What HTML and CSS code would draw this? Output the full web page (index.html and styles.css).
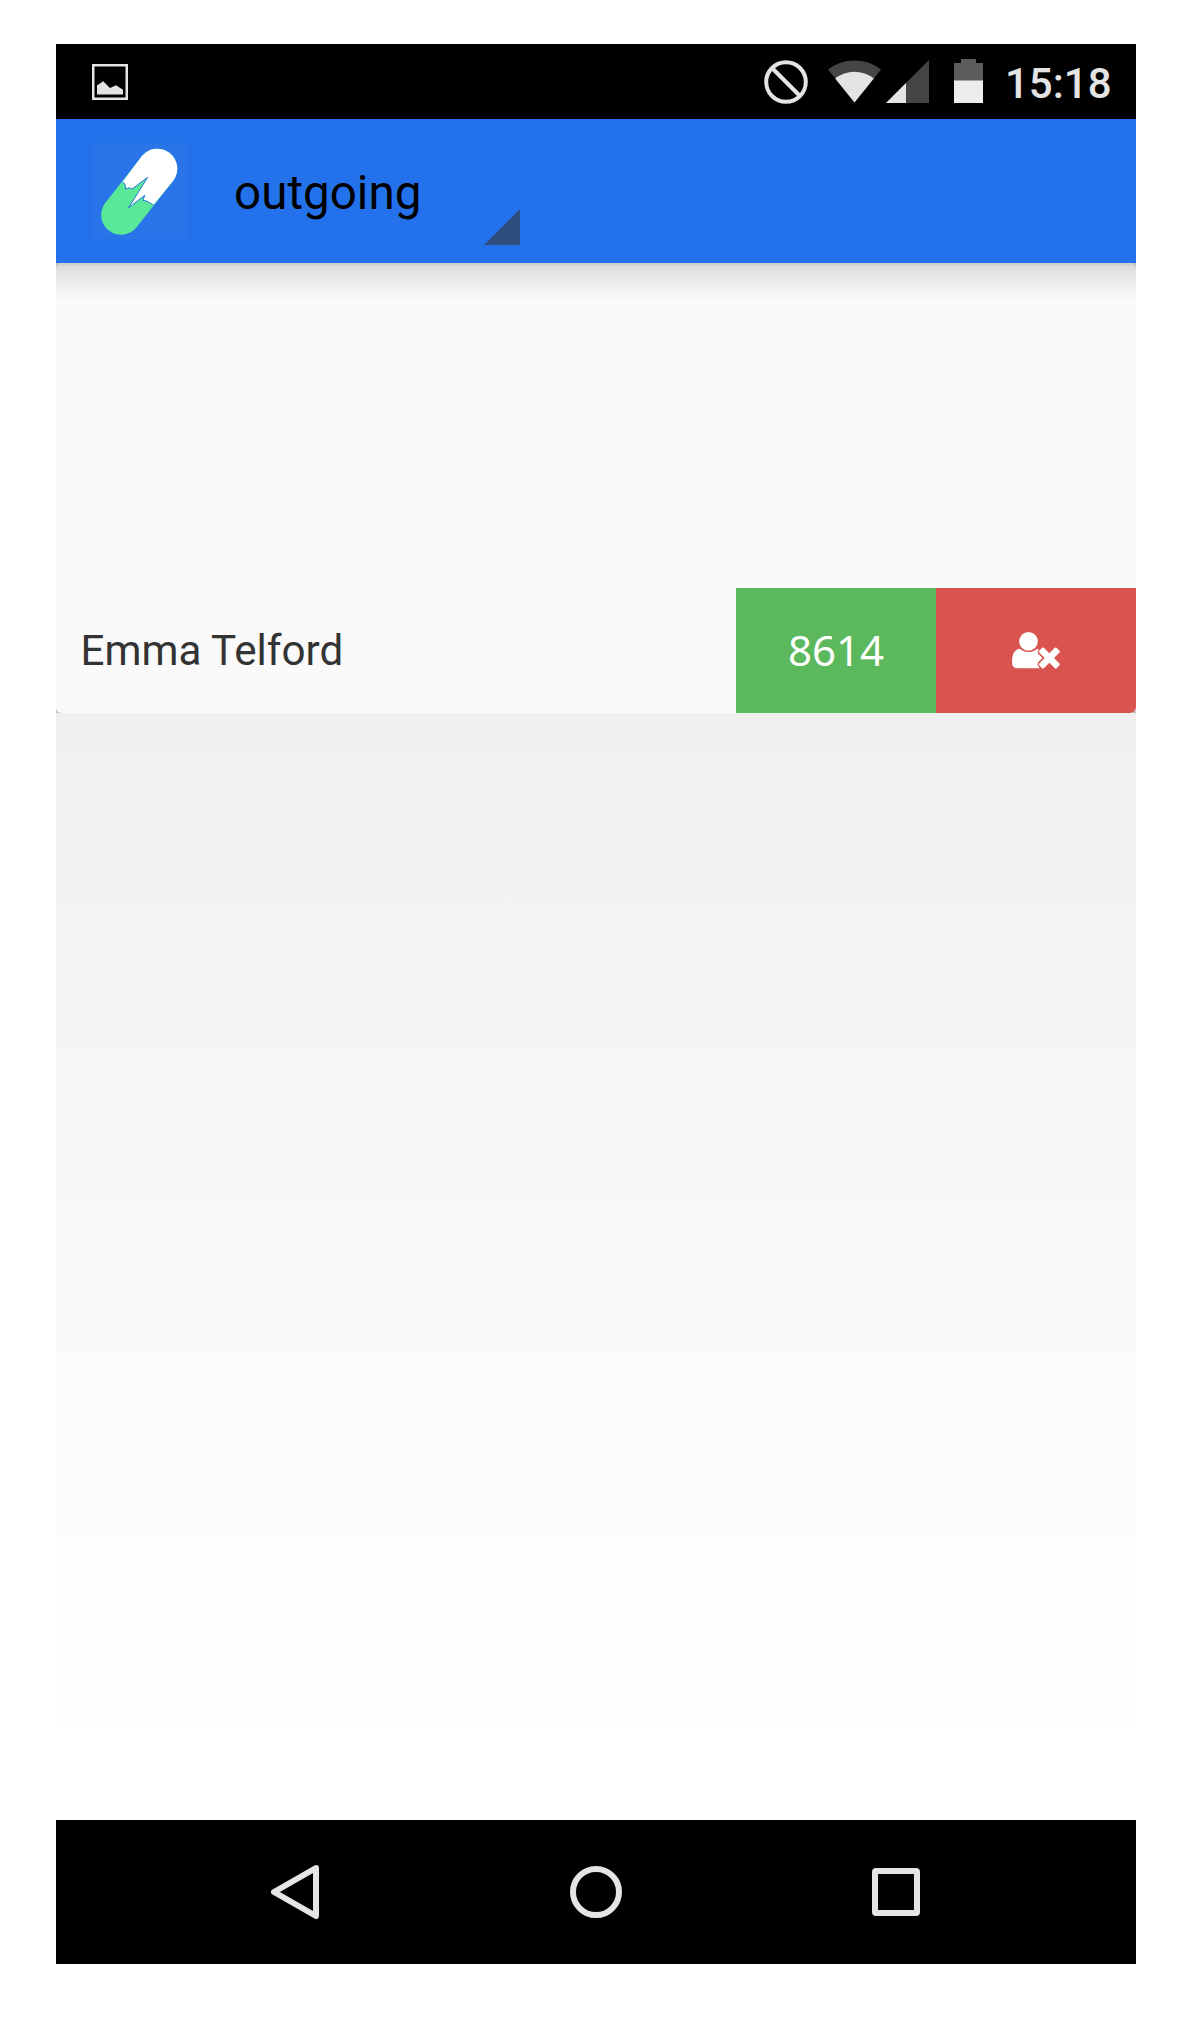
FILE: index.html
```html
<!DOCTYPE html>
<html lang="en">
<head>
<meta charset="utf-8">
<title>outgoing</title>
<link rel="stylesheet" href="styles.css">
</head>
<body>
<div class="phone">
  <header class="status-bar">
    <svg class="icon-picture" width="36" height="36" viewBox="0 0 36 36">
      <rect x="1.25" y="1.25" width="33.5" height="33.5" fill="none" stroke="#e4e4e4" stroke-width="2.5"/>
      <path d="M5 30.5V21.5L11.2 17.3L18 24L24 21.3L31 25.7V30.5Z" fill="#e4e4e4"/>
    </svg>
    <div class="status-icons">
      <svg class="icon-blocked" width="44" height="44" viewBox="0 0 44 44" fill="none" stroke="#e4e4e4" stroke-width="4">
        <circle cx="22" cy="22" r="19.8"/>
        <path d="M8 8L36 36"/>
      </svg>
      <svg class="icon-wifi" width="53" height="43" viewBox="0 0 53 43">
        <path d="M26.5 42.5L0 9.5Q11.500 .4 26.500 .4T53 9.500Z" fill="#454545"/>
        <path d="M26.500 42.500L7.200 18.400Q16 11.700 26.500 11.700T45.800 18.400Z" fill="#e4e4e4"/>
      </svg>
      <svg class="icon-signal" width="43" height="43" viewBox="0 0 43 43">
        <path d="M43 0V43H0Z" fill="#454545"/>
        <path d="M20 23V43H0Z" fill="#e4e4e4"/>
      </svg>
      <svg class="icon-battery" width="29" height="44" viewBox="0 0 29 44">
        <path d="M7 0H22V4H29V44H0V4H7Z" fill="#5c5c5c"/>
        <path d="M0 21.500H29V44H0Z" fill="#ededed"/>
      </svg>
      <span class="clock">15:18</span>
    </div>
  </header>

  <nav class="action-bar">
    <svg class="logo" width="93" height="96" viewBox="9 24 279 288">
      <rect x="9" y="24" width="279" height="288" fill="#2874e8"/>
      <path d="M202 101L93 240" stroke="#58e898" stroke-width="119" stroke-linecap="round"/>
      <path d="M98 140L155 64A59.500 59.500 0 0 1 249 138L190 210L172 199L159 196L164 181L115 219L173 127L126 162L118 158L107 162L105 148Z" fill="#fff"/>
      <path d="M98 140L105 148L107 162L118 158L126 162L173 127L115 219L164 181L159 196L172 199L190 210" fill="none" stroke="#2874dc" stroke-width="3"/>
    </svg>
    <div class="spinner">
      <span class="spinner-label">outgoing</span>
      <span class="spinner-arrow"></span>
    </div>
  </nav>

  <main class="content">
    <div class="list-frame">
      <section class="list">
        <div class="row">
          <span class="name">Emma Telford</span>
          <button class="button code">8614</button>
          <button class="button remove" aria-label="Remove">
            <svg width="48" height="37" viewBox="0 0 144 111">
              <path d="M23 50C29 55 38 60 50 60S70 55 76 50Q79 50 80 54L76 59L92 78L76 97L83 109H17Q0 109 0 91C0 67 8 51 23 50Z" fill="#fff"/>
              <circle cx="49.500" cy="28" r="31" fill="#d9534f"/>
              <circle cx="49.500" cy="28" r="28" fill="#fff"/>
              <g transform="rotate(45 112 78)">
                <path d="M77 78H147M112 43V113" stroke="#d9534f" stroke-width="29"/>
                <rect x="75" y="68" width="74" height="20" rx="4" fill="#fff"/>
                <rect x="102" y="41" width="20" height="74" rx="4" fill="#fff"/>
              </g>
            </svg>
          </button>
        </div>
      </section>
    </div>
  </main>

  <footer class="nav-bar">
    <svg width="50" height="56" viewBox="0 0 50 56"><path d="M46 4L4 28L46 52Z" fill="none" stroke="#e5e5e5" stroke-width="6" stroke-linejoin="round"/></svg>
    <svg width="52" height="52" viewBox="0 0 52 52"><circle cx="26" cy="26" r="23" fill="none" stroke="#e5e5e5" stroke-width="6"/></svg>
    <svg width="48" height="48" viewBox="0 0 48 48"><path fill-rule="evenodd" d="M4 0H44Q48 0 48 4V44Q48 48 44 48H4Q0 48 0 44V4Q0 0 4 0ZM6 6V42H42V6Z" fill="#e5e5e5"/></svg>
  </footer>
</div>
</body>
</html>
```
FILE: styles.css
```css
* { box-sizing: border-box; }

body {
  margin: 0;
  padding: 44px 48px 68px 56px;
  background: #fff;
  font-family: Roboto, sans-serif;
}

svg { display: block; flex: none; }

.phone {
  display: flex;
  flex-direction: column;
  width: 1080px;
  height: 1920px;
}

.status-bar {
  display: flex;
  justify-content: space-between;
  height: 75px;
  padding: 0 25px 0 36px;
  background: #000;
}

.icon-picture { margin-top: 20px; }

.status-icons {
  display: flex;
  align-items: flex-start;
}

.icon-blocked { margin: 16px 20px 0 0; }
.icon-wifi { margin: 16px 5px 0 0; }
.icon-signal { margin: 16px 25px 0 0; }
.icon-battery { margin: 15px 22px 0 0; }

.clock {
  width: 106px;
  color: #e4e4e4;
  font-size: 42px;
  font-weight: 500;
  line-height: 80px;
}

.action-bar {
  display: flex;
  align-items: center;
  height: 144px;
  padding-left: 37px;
  background: #2472eb;
}

.spinner {
  display: flex;
  align-items: flex-end;
  justify-content: space-between;
  width: 286px;
  height: 108px;
  margin-left: 48px;
}

.spinner-label {
  color: #000;
  font-size: 47.600px;
  line-height: 104px;
}

.spinner-arrow {
  width: 36px;
  height: 36px;
  background: #2e4e7e;
  clip-path: polygon(100% 0, 100% 100%, 0 100%);
}

.content {
  flex: 1;
  background: linear-gradient(#f0f0f0 450px, #fafafa 1080px, #fff 1480px);
}

.list-frame { background: #bdbdbd; }

.list {
  display: flex;
  align-items: flex-end;
  height: 450px;
  border-radius: 5px;
  background: linear-gradient(#d0d0d0 3px, #dcdcdc 3px, #e9e9e9 15px, #f3f3f3 27px, #fafafa 40px);
}

.row {
  display: flex;
  width: 100%;
  height: 125px;
  overflow: hidden;
  border-radius: 0 0 6px 6px;
}

.name {
  flex: 1;
  padding-left: 24.500px;
  color: #333;
  font-size: 42.200px;
  line-height: 126px;
}

.button {
  display: flex;
  align-items: center;
  justify-content: center;
  width: 200px;
  padding: 0;
  border: 0;
  color: #fff;
  font: 42px "Noto Sans", sans-serif;
}

.code { padding-bottom: 2px; background: #5cb85c; }
.remove { background: #d9534f; }

.nav-bar {
  display: flex;
  align-items: center;
  justify-content: space-between;
  height: 144px;
  padding: 0 216px 0 214px;
  background: #000;
}
```
